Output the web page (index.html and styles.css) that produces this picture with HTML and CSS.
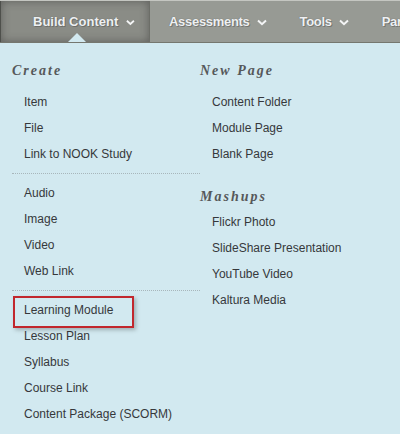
FILE: index.html
```html
<!DOCTYPE html>
<html lang="en">

<head>
    <meta charset="utf-8">
    <title>Build Content</title>
    <link rel="stylesheet" href="styles.css">
</head>

<body>
    <!--TOP MENU-->
    <nav class="menu">
        <div class="tab active">
            <span>Build Content</span>
            <svg class="chev" width="10" height="7" viewBox="0 0 10 7"><path d="M1 1.5 L5 5.2 L9 1.5" /></svg>
            <i class="pointer"></i>
        </div>
        <div class="tab">
            <span>Assessments</span>
            <svg class="chev" width="10" height="7" viewBox="0 0 10 7"><path d="M1 1.5 L5 5.2 L9 1.5" /></svg>
        </div>
        <div class="tab">
            <span>Tools</span>
            <svg class="chev" width="10" height="7" viewBox="0 0 10 7"><path d="M1 1.5 L5 5.2 L9 1.5" /></svg>
        </div>
        <div class="tab">
            <span>Partner Content</span>
        </div>
    </nav>

    <!--DROPDOWN-->
    <section class="dropdown">
        <div class="col left">
            <h2>Create</h2>
            <ul>
                <li>Item</li>
                <li>File</li>
                <li>Link to NOOK Study</li>
            </ul>
            <hr>
            <ul>
                <li>Audio</li>
                <li>Image</li>
                <li>Video</li>
                <li>Web Link</li>
            </ul>
            <hr>
            <ul>
                <li class="highlight">Learning Module</li>
                <li>Lesson Plan</li>
                <li>Syllabus</li>
                <li>Course Link</li>
                <li>Content Package (SCORM)</li>
            </ul>
        </div>
        <div class="col right">
            <h2>New Page</h2>
            <ul>
                <li>Content Folder</li>
                <li>Module Page</li>
                <li>Blank Page</li>
            </ul>
            <h2 class="second">Mashups</h2>
            <ul class="tight">
                <li>Flickr Photo</li>
                <li>SlideShare Presentation</li>
                <li>YouTube Video</li>
                <li>Kaltura Media</li>
            </ul>
        </div>
    </section>
</body>

</html>
```

FILE: styles.css
```css
/*GENERELT*/
* {
    margin: 0;
    padding: 0;
    box-sizing: border-box;
}

body {
    width: 400px;
    height: 434px;
    overflow: hidden;
    background: #d2e9f0;
    font-family: 'Liberation Sans', Arial, sans-serif;
}

/*TOP MENU*/
.menu {
    display: flex;
    height: 43px;
    background: #979a94;
    border-top: 1px solid #c4c6c1;
    border-bottom: 1px solid #75776f;
    white-space: nowrap;
    overflow: hidden;
}

.tab {
    position: relative;
    flex-shrink: 0;
    display: flex;
    align-items: center;
    gap: 7px;
    padding: 0 14px 0 19px;
    color: #eef0f2;
    font-size: 13px;
    font-weight: bold;
    letter-spacing: -0.3px;
    text-shadow: 0 0 1px #5d5f5a, 1px 1px 0 rgba(60, 60, 60, 0.35);
}

.tab.active {
    width: 150px;
    padding-left: 32px;
    gap: 8px;
    letter-spacing: 0;
    background: #8a8c86;
    border-left: 1px solid #4e504b;
    border-right: 1px solid #6c6e68;
    box-shadow: inset 0 0 8px rgba(40, 40, 40, 0.45);
}

.chev {
    margin-top: 2px;
}

.chev path {
    fill: none;
    stroke: #f4f5f6;
    stroke-width: 2;
}

.pointer {
    position: absolute;
    left: 66px;
    bottom: -1px;
    width: 0;
    height: 0;
    border-left: 10px solid transparent;
    border-right: 10px solid transparent;
    border-bottom: 10px solid #d2e9f0;
}

/*DROPDOWN*/
.dropdown {
    display: grid;
    grid-template-columns: 188px 1fr;
    padding-left: 12px;
}

h2 {
    margin-top: 16px;
    height: 24px;
    line-height: 24px;
    font-family: 'Liberation Serif', Georgia, serif;
    font-style: italic;
    font-weight: bold;
    font-size: 14px;
    letter-spacing: 2px;
    color: #56585a;
}

h2.second {
    margin-top: 18px;
}

ul {
    list-style: none;
    margin: 6px 0;
}

ul.tight {
    margin-top: 0;
}

li {
    height: 26px;
    line-height: 26px;
    padding-left: 12px;
    font-size: 12px;
    color: #36383b;
}

hr {
    border: none;
    border-top: 1px dotted #a8b6bb;
}

/*MARKERING*/
.highlight {
    position: relative;
}

.highlight::after {
    content: "";
    position: absolute;
    left: 1px;
    top: -1px;
    width: 117px;
    height: 28px;
    border: 2px solid #c1272d;
    box-shadow: 2px 2px 4px rgba(0, 0, 0, 0.25);
}
```
